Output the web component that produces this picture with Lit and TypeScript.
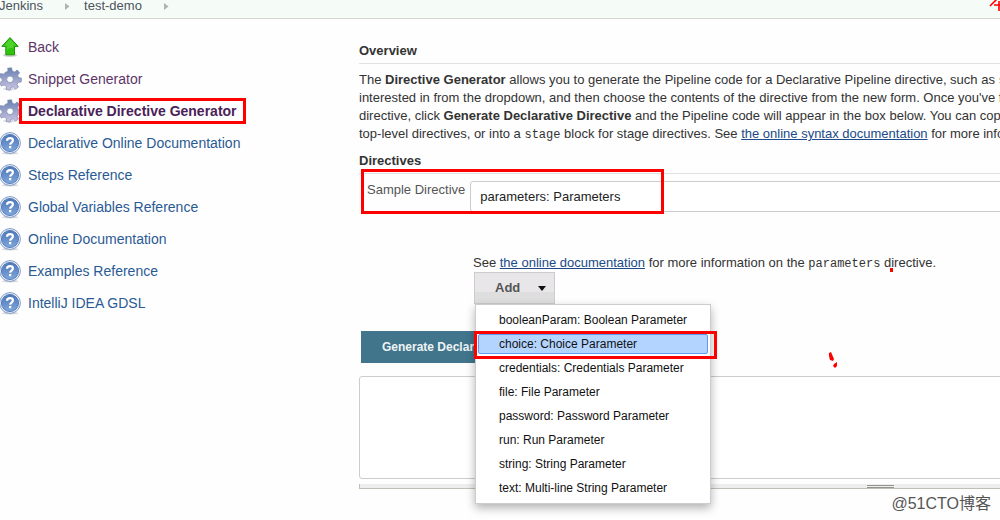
import { LitElement, html, css, svg } from "lit";
import { customElement, state } from "lit/decorators.js";
import { classMap } from "lit/directives/class-map.js";

type IconName = "up" | "gear" | "help";

const icons = {
  up: svg`
    <ellipse cx="12" cy="20.4" rx="7" ry="1.6" fill="#c9cfc6" />
    <path d="M12 2.6 L20.2 11.4 H16.5 V19.8 H7.8 V11.4 H3.8 Z" fill="#2fc30c" stroke="#209608" stroke-width="1" stroke-linejoin="round" />
    <path d="M12 4.2 L18 10.5 H15.3 V13.5 C12 12.5 10 13.5 8.8 15.5 V10.5 H6 Z" fill="#4fd22a" />`,
  gear: svg`
    <ellipse cx="12" cy="22" rx="7" ry="1.4" fill="#dcdce2" />
    <path fill="url(#metal)" stroke="#7c88ae" stroke-width=".7" fill-rule="evenodd" d="M10 4.2 L9.7 1.2 L13.6 .8 L14.2 4 L16.6 5 L19.2 3 L21.6 5.8 L19.6 8.2 L20.5 10.5 L23.5 11.2 L23.2 15 L20.2 15.2 L19 17.5 L20.5 20 L17.5 22 L15.4 19.8 L13 20.4 L12 23.2 L8.4 22.5 L8.3 19.5 L6.2 18 L3.4 19 L1.6 15.8 L4.2 13.9 L4 11.5 L1.2 10 L2.4 6.6 L5.6 7.2 L7.2 5.4 Z M12 9 A3.3 3.3 0 1 0 12 15.6 A3.3 3.3 0 1 0 12 9 Z" />`,
  help: svg`
    <ellipse cx="12" cy="22.2" rx="8" ry="1.3" fill="#d4d4d4" />
    <circle cx="12" cy="12" r="10.4" fill="#edf2fa" stroke="#7f9ccb" stroke-width="1" />
    <circle cx="12" cy="12" r="8.6" fill="url(#glass)" stroke="#4670ae" stroke-width=".8" />
    <path d="M9 9.7 C9.1 7.8 10.2 7.1 12 7.1 C13.8 7.1 14.9 8 14.9 9.4 C14.9 11.5 12.3 11.5 12.1 13.7" fill="none" stroke="#fff" stroke-width="2.2" />
    <rect x="11" y="14.9" width="2.3" height="2.3" fill="#fff" />`,
};

@customElement("side-icon")
class SideIcon extends LitElement {
  static properties = { name: {} };
  declare name: IconName;
  static styles = css`
    :host { display: block; width: 24px; height: 24px; flex: none; }
    svg { display: block; }
  `;
  render() {
    return html`<svg width="24" height="24" viewBox="0 0 24 24" aria-hidden="true">
      <defs>
        <linearGradient id="metal" x1="0" y1="0" x2="0" y2="1">
          <stop offset="0" stop-color="#6580b0" /><stop offset="1" stop-color="#cfc6e4" />
        </linearGradient>
        <linearGradient id="glass" x1="0" y1="0" x2="0" y2="1">
          <stop offset="0" stop-color="#4b76b6" /><stop offset="1" stop-color="#81a6dc" />
        </linearGradient>
      </defs>
      ${icons[this.name]}
    </svg>`;
  }
}

const tasks: { icon: IconName; label: string; visited?: boolean; current?: boolean }[] = [
  { icon: "up", label: "Back", visited: true },
  { icon: "gear", label: "Snippet Generator", visited: true },
  { icon: "gear", label: "Declarative Directive Generator", visited: true, current: true },
  { icon: "help", label: "Declarative Online Documentation" },
  { icon: "help", label: "Steps Reference" },
  { icon: "help", label: "Global Variables Reference" },
  { icon: "help", label: "Online Documentation" },
  { icon: "help", label: "Examples Reference" },
  { icon: "help", label: "IntelliJ IDEA GDSL" },
];

const kinds = [
  "booleanParam: Boolean Parameter",
  "choice: Choice Parameter",
  "credentials: Credentials Parameter",
  "file: File Parameter",
  "password: Password Parameter",
  "run: Run Parameter",
  "string: String Parameter",
  "text: Multi-line String Parameter",
];

@customElement("app-root")
class AppRoot extends LitElement {
  @state() selected = 1;

  static styles = css`
    :host {
      display: block;
      position: relative;
      min-height: 100vh;
      overflow: hidden;
      background: #fefefe;
      color: #333;
      font: 13px/18px "Liberation Sans", Arial, sans-serif;
    }
    *, *::after { box-sizing: border-box; }
    button, select, textarea { font: inherit; margin: 0; }
    .crumbs {
      display: flex;
      height: 19px;
      align-items: flex-start;
      background: #f5fbf7;
      border-bottom: 1px solid #d3d7cc;
      line-height: 12px;
    }
    .crumbs a { color: #4d545d; text-decoration: none; }
    .crumbs svg { margin: 3px 14px 0 22px; }
    .crumbs a:first-child { margin-left: -1px; }
    .page { display: grid; grid-template-columns: 359px minmax(0, 1fr); }
    .tasks { padding-top: 12px; font-size: 14px; }
    .tasks ul, .menu { list-style: none; margin: 0; padding: 0; }
    .task {
      display: flex;
      gap: 6px;
      height: 32px;
      align-items: center;
      margin-left: -2px;
      color: #2a5a94;
      text-decoration: none;
      white-space: nowrap;
    }
    .task.visited { color: #5c3566; }
    .task.current { font-weight: bold; color: #4b2158; }
    .current span { position: relative; }
    .current span::after {
      content: "";
      position: absolute;
      inset: -4px -9px;
      border: 3px solid #fd0000;
    }
    main { padding-top: 22px; white-space: nowrap; }
    h2 {
      margin: 0;
      height: 23px;
      font-size: 13px;
      line-height: 20px;
      border-bottom: 1px solid #e2e2e2;
    }
    .intro { margin: 7px 0 8px; overflow: hidden; }
    a { color: #204a87; }
    code { font: 12px "Liberation Mono", monospace; }
    .directive { position: relative; display: flex; padding: 7px 0 0 8px; gap: 5px; color: #555; }
    .directive::after {
      content: "";
      position: absolute;
      left: 2px;
      top: -5px;
      width: 303px;
      height: 45px;
      border: 3px solid #fd0000;
      pointer-events: none;
    }
    .directive label { flex: none; }
    .directive select {
      flex: 1;
      min-width: 0;
      height: 31px;
      margin-right: -8px;
      padding: 0 9px;
      appearance: none;
      border: 1px solid #ccc;
      border-radius: 3px;
      background: #fff;
      color: #222;
    }
    .config { padding: 42px 0 0 114px; }
    .config p { margin: 0; }
    .adder { position: relative; width: 81px; margin: 0 0 0 1px; }
    .add {
      display: flex;
      width: 100%;
      height: 32px;
      padding: 0 8px 0 20px;
      align-items: center;
      justify-content: space-between;
      border: 1px solid #ccc;
      background: linear-gradient(#e8e6e8 62%, #dededf 62%);
      color: #555;
      font-weight: bold;
    }
    .menu {
      position: absolute;
      left: 1px;
      top: 32px;
      z-index: 2;
      width: 236px;
      padding: 3px 2px;
      border: 1px solid #ccc;
      background: #fff;
      box-shadow: 0 4px 9px rgba(0, 0, 0, .3);
    }
    .menu li { position: relative; height: 24px; display: flex; align-items: center; }
    .menu button {
      width: 100%;
      height: 20px;
      padding: 0 20px;
      border: 1px solid transparent;
      background: none;
      color: #111;
      font-size: 12px;
      text-align: left;
    }
    .menu .on { background: #b3d4ff; border: 1px solid #609cf5; border-radius: 2px; }
    .marked::after {
      content: "";
      position: absolute;
      inset: -1px -9px -3px -4px;
      border: 3px solid #fd0000;
      pointer-events: none;
    }
    .generate {
      display: block;
      height: 32px;
      margin: 27px 0 13px 2px;
      padding: 0 21px;
      border: 0;
      background: #41758c;
      color: #eef3f5;
      font-size: 12px;
      font-weight: bold;
    }
    .output { margin-right: -8px; }
    .output textarea {
      display: block;
      width: 100%;
      height: 103px;
      border: 1px solid #ccc;
      border-radius: 3px;
      resize: none;
      background: #fff;
    }
    .grip {
      display: grid;
      justify-content: center;
      height: 5px;
      margin-top: 5px;
      padding-left: 393px;
      border: solid #bfbfb6;
      border-width: 0 0 1px 1px;
      background: #eee;
    }
    .grip i { width: 27px; height: 3px; margin-top: 1px; border: solid #92958c; border-width: 1px 0; }
    .ink { position: absolute; inset: 0; width: 100%; height: 100%; pointer-events: none; z-index: 3; }
    .mark {
      position: absolute;
      right: 9px;
      bottom: 6px;
      color: #555;
      font: 16px/20px "Liberation Sans", "Noto Sans CJK SC", sans-serif;
    }
  `;

  render() {
    const arrow = html`<svg width="5" height="7" viewBox="0 0 5 7" aria-hidden="true"><path d="M0 0 L4.5 3.5 L0 7Z" fill="#b0b3b3" /></svg>`;
    return html`
      <nav class="crumbs" aria-label="Breadcrumb">
        <a href="#">Jenkins</a>${arrow}<a href="#">test-demo</a>${arrow}
      </nav>
      <div class="page">
        <nav class="tasks" aria-label="Tasks">
          <ul>
            ${tasks.map((t) => html`<li>
              <a href="#" class=${classMap({ task: true, visited: !!t.visited, current: !!t.current })}>
                <side-icon .name=${t.icon}></side-icon><span>${t.label}</span>
              </a>
            </li>`)}
          </ul>
        </nav>
        <main>
          <h2>Overview</h2>
          <p class="intro">
            The <b>Directive Generator</b> allows you to generate the Pipeline code for a Declarative Pipeline directive, such as <code>s</code><br />
            interested in from the dropdown, and then choose the contents of the directive from the new form. Once you've f<br />
            directive, click <b>Generate Declarative Directive</b> and the Pipeline code will appear in the box below. You can cop<br />
            top-level directives, or into a <code>stage</code> block for stage directives. See <a href="#">the online syntax documentation</a> for more info
          </p>
          <h2>Directives</h2>
          <div class="directive">
            <label for="directive">Sample Directive</label>
            <select id="directive"><option>parameters: Parameters</option></select>
          </div>
          <div class="config">
            <p>See <a href="#">the online documentation</a> for more information on the <code>parameters</code> directive.</p>
            <div class="adder">
              <button class="add" type="button" aria-haspopup="menu" aria-expanded="true">
                Add
                <svg width="8" height="5" viewBox="0 0 8 5" aria-hidden="true"><path d="M0 0H8L4 5Z" fill="#111" /></svg>
              </button>
              <ul class="menu" role="menu">
                ${kinds.map((k, i) => html`<li role="none" class=${classMap({ marked: i === 1 })}>
                  <button type="button" role="menuitem" class=${classMap({ on: i === this.selected })}
                    @mouseenter=${() => (this.selected = i)}>${k}</button>
                </li>`)}
              </ul>
            </div>
          </div>
          <button class="generate" type="button">Generate Declarative Directive</button>
          <div class="output">
            <textarea aria-label="Generated directive"></textarea>
            <div class="grip"><i></i></div>
          </div>
        </main>
      </div>
      <svg class="ink" aria-hidden="true">
        <g fill="#fd0000">
          <rect x="890" y="268" width="3" height="4" />
          <path d="M829 353 L831 352 L834 359 L833 361 L830 360 L829 356Z" />
          <path d="M834 364 L837 362 L837 366 L835 368 L833 366Z" />
        </g>
        <path d="M997 -1 L990 6 M994 5 H1000 M999 1 V11" fill="none" stroke="#fd0000" stroke-width="1.6" />
      </svg>
      <div class="mark">@51CTO博客</div>
    `;
  }
}
